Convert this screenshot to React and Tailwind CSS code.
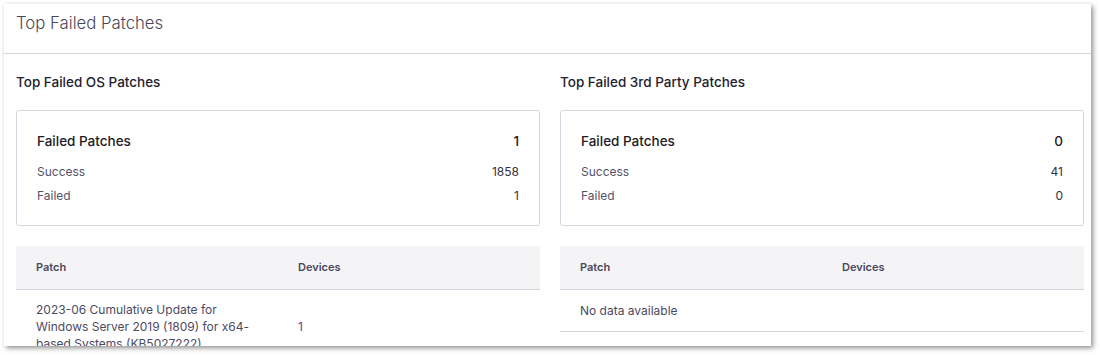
export default function App() {
  const font = { fontFamily: 'Inter, "Noto Sans", sans-serif' };
  const Summary = ({ total, success, failed }) => (
    <div className="h-[116px] rounded-[3px] border border-[#d6d4de] px-5 pt-[20px]">
      <div className="flex items-center justify-between text-[13.5px] font-medium text-[#1c1b26] leading-[20px]">
        <span>Failed Patches</span>
        <span>{total}</span>
      </div>
      <div className="mt-[12px] flex items-center justify-between text-[12px] leading-[17px] text-[#55526a]">
        <span>Success</span>
        <span className="text-[#33313f]">{success}</span>
      </div>
      <div className="mt-[7px] flex items-center justify-between text-[12px] leading-[17px] text-[#55526a]">
        <span>Failed</span>
        <span className="text-[#33313f]">{failed}</span>
      </div>
    </div>
  );
  const Head = () => (
    <div className="flex h-[44px] items-center border-b border-[#d6d4de] bg-[#f4f4f6] text-[11px] font-semibold text-[#4a4860]">
      <div className="w-1/2 px-5">Patch</div>
      <div className="w-1/2 px-5">Devices</div>
    </div>
  );
  return (
    <div className="h-[355px] w-[1100px] bg-white p-[4px]" style={font}>
      <div className="h-[342px] w-[1087px] overflow-hidden bg-white shadow-[2px_2px_5px_rgba(0,0,0,0.45)]">
        <div className="flex h-[50px] items-start border-b border-[#d6d4de] px-3 pt-[7px] text-[16.75px] font-light text-[#4a4858] leading-[24px]">
          Top Failed Patches
        </div>
        <div className="grid grid-cols-2 gap-5 pl-3 pr-[7px]">
          <div>
            <div className="pt-[20px] text-[13.5px] font-medium text-[#232230] leading-[17px]">Top Failed OS Patches</div>
            <div className="mt-[19px]">
              <Summary total="1" success="1858" failed="1" />
            </div>
            <div className="mt-[20px]">
              <Head />
              <div className="flex items-center text-[12px] leading-[17px] text-[#4d4a60]">
                <div className="w-1/2 px-5 py-[11px]">
                  2023-06 Cumulative Update for Windows Server 2019 (1809) for x64-based Systems (KB5027222)
                </div>
                <div className="w-1/2 px-5 text-[#5c3f7a]">1</div>
              </div>
            </div>
          </div>
          <div>
            <div className="pt-[20px] text-[13.5px] font-medium text-[#232230] leading-[17px]">Top Failed 3rd Party Patches</div>
            <div className="mt-[19px]">
              <Summary total="0" success="41" failed="0" />
            </div>
            <div className="mt-[20px]">
              <Head />
              <div className="flex h-[42px] items-center border-b border-[#d6d4de] px-5 text-[12px] text-[#4d4a60]">
                No data available
              </div>
            </div>
          </div>
        </div>
      </div>
    </div>
  );
}
